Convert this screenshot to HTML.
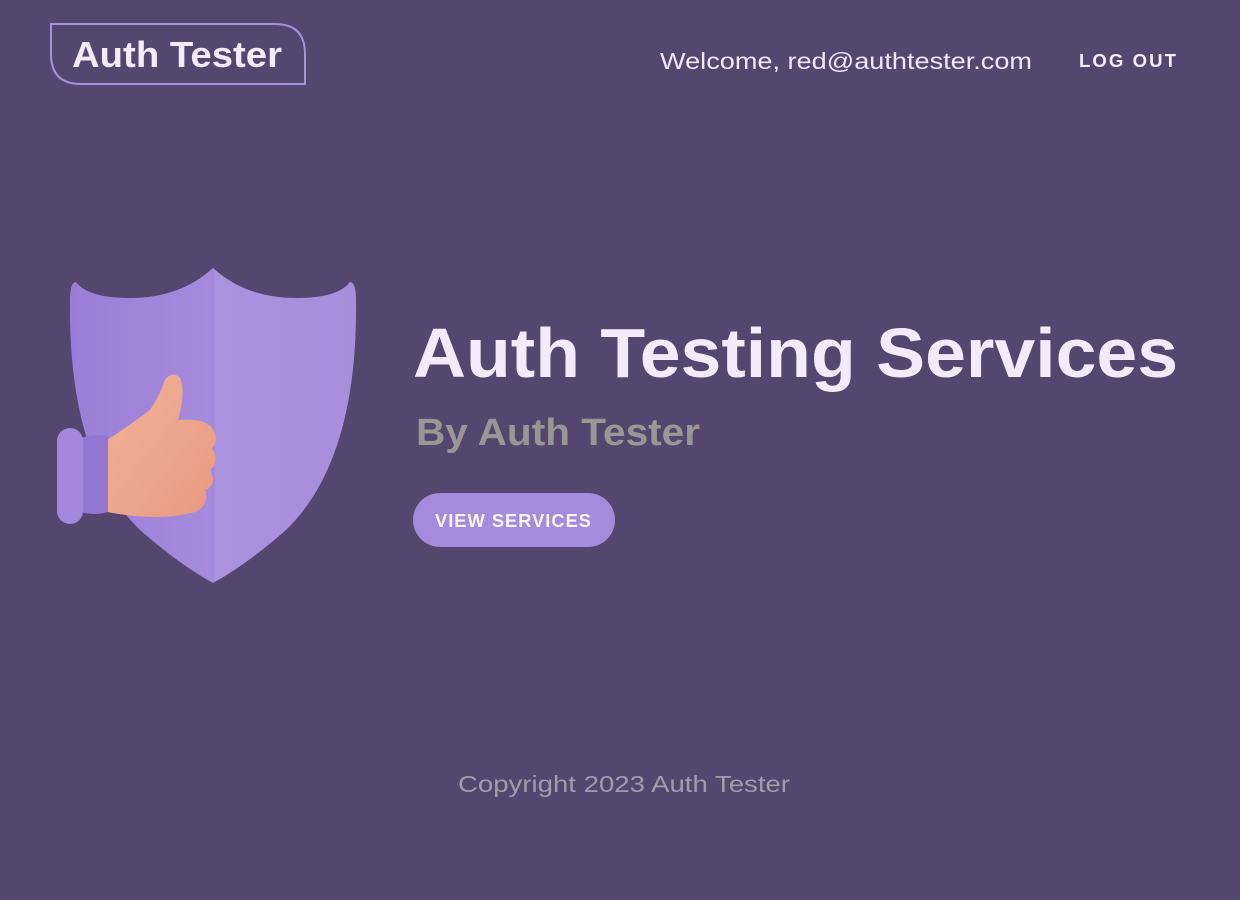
<!DOCTYPE html>
<html><head><meta charset="utf-8"><style>
html,body{margin:0;padding:0;width:1240px;height:900px;background:#54466e;overflow:hidden;font-family:"Liberation Sans",sans-serif}
svg{position:absolute;left:0;top:0}
</style></head><body>
<svg width="1240" height="900" viewBox="0 0 1240 900">
<defs>
<linearGradient id="sh" x1="0" y1="0" x2="1" y2="0">
<stop offset="0" stop-color="#9a7ed8"/><stop offset="0.5" stop-color="#a68bdc"/><stop offset="0.51" stop-color="#ab92de"/><stop offset="1" stop-color="#a88ddb"/></linearGradient>
<linearGradient id="hd" x1="0" y1="0" x2="1" y2="1"><stop offset="0" stop-color="#f2b39a"/><stop offset="1" stop-color="#e8997f"/></linearGradient>
</defs>
<path d="M51,24 H275 Q305,24 305,54 V84 H81 Q51,84 51,54 Z" fill="none" stroke="#a98fdc" stroke-width="2"/>
<text x="72" y="67" font-size="36" font-weight="bold" fill="#f6e9fb" textLength="210" lengthAdjust="spacingAndGlyphs">Auth Tester</text>
<text x="660" y="69" font-size="23" fill="#f1e6f6" textLength="372" lengthAdjust="spacingAndGlyphs">Welcome, red@authtester.com</text>
<text x="1079" y="67" font-size="18" font-weight="bold" fill="#f6ecf8" letter-spacing="2" textLength="99" lengthAdjust="spacingAndGlyphs">LOG OUT</text>
<!-- shield -->
<path d="M213,268 Q180,298 130,298 Q88,298 76,282 Q70,282 70,300 Q68,460 140,530 Q180,565 213,583 Q246,565 286,530 Q358,460 356,300 Q356,282 350,282 Q338,298 296,298 Q246,298 213,268 Z" fill="url(#sh)"/>
<path d="M213,268 V583" stroke="#9b80d2" stroke-width="1" opacity="0.6"/>
<!-- hand -->
<path d="M107,440 Q130,425 150,410 Q160,395 165,380 Q172,370 180,378 Q186,392 178,420 Q205,418 212,428 Q220,440 212,448 Q220,462 210,470 Q218,485 205,490 Q210,505 195,512 Q160,522 107,512 Z" fill="url(#hd)"/>
<path d="M80,438 Q100,433 108,436 V512 Q95,516 80,512 Z" fill="#9375d2"/>
<rect x="57" y="428" width="26" height="96" rx="13" fill="#a486de"/>
<text x="413" y="377" font-size="70" font-weight="bold" fill="#f6e9fb" textLength="765" lengthAdjust="spacingAndGlyphs">Auth Testing Services</text>
<text x="416" y="445" font-size="38" font-weight="bold" fill="#9a9693" textLength="284" lengthAdjust="spacingAndGlyphs">By Auth Tester</text>
<rect x="413" y="493" width="202" height="54" rx="27" fill="#a68bdc"/>
<text x="435" y="527" font-size="18" font-weight="bold" fill="#fbf4fd" letter-spacing="1" textLength="157" lengthAdjust="spacingAndGlyphs">VIEW SERVICES</text>
<text x="458" y="792" font-size="23" fill="#a39ca8" textLength="332" lengthAdjust="spacingAndGlyphs">Copyright 2023 Auth Tester</text>
</svg>
</body></html>
